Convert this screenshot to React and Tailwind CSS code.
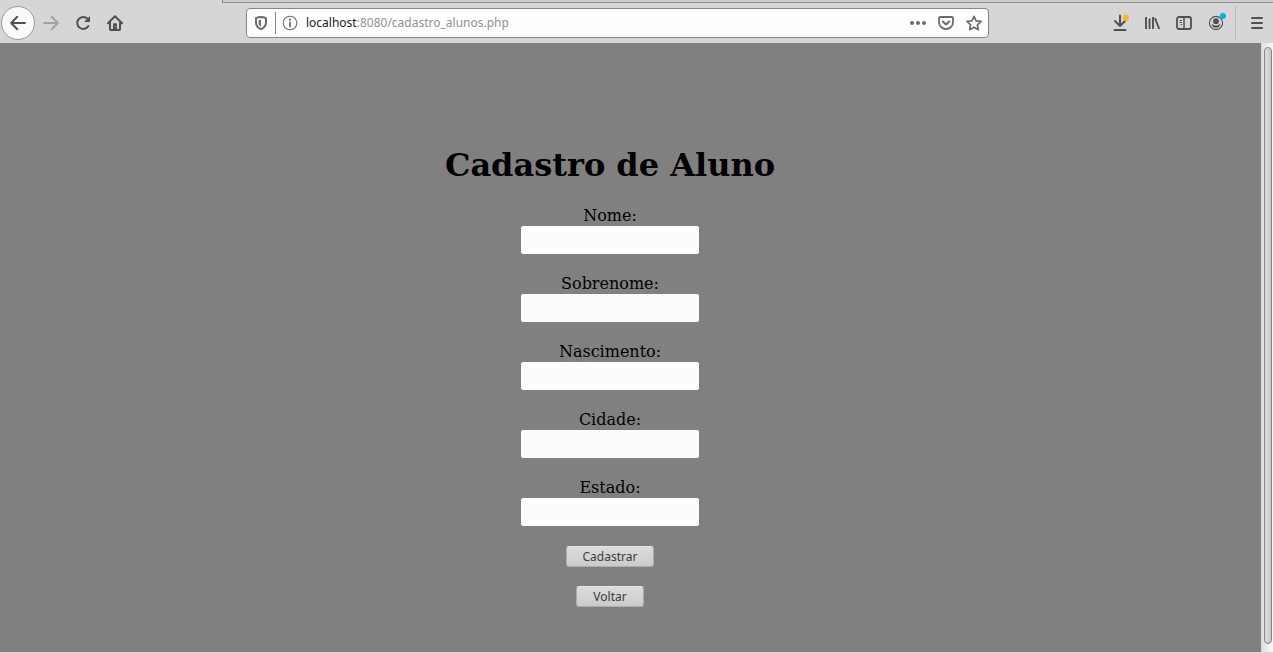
import React from 'react';

const fields = [
  { id: 'nome', label: 'Nome:' },
  { id: 'sobrenome', label: 'Sobrenome:' },
  { id: 'nascimento', label: 'Nascimento:' },
  { id: 'cidade', label: 'Cidade:' },
  { id: 'estado', label: 'Estado:' },
];

function Icon({ children, className = '' }) {
  return (
    <svg
      viewBox="0 0 16 16"
      className={`size-4 shrink-0 ${className}`}
      fill="none"
      stroke="currentColor"
      strokeWidth="2"
      strokeLinecap="round"
      strokeLinejoin="round"
      aria-hidden="true"
    >
      {children}
    </svg>
  );
}

function ToolButton({ label, children, className = '' }) {
  return (
    <button type="button" aria-label={label} className={`flex h-8 w-8 items-center justify-center ${className}`}>
      {children}
    </button>
  );
}

function Toolbar() {
  return (
    <header className="shrink-0 bg-[#d6d6d6] text-[#505050]">
      <div className="flex h-[3px]">
        <div className="w-[222px]" />
        <div className="flex-1 border-b border-l border-[#949494] bg-[#cdcdcd]" />
      </div>
      <div className="flex h-10 items-center pl-px">
        <nav className="flex items-center">
          <button
            type="button"
            aria-label="Voltar uma página"
            className="flex size-[34px] items-center justify-center rounded-full border border-[#999] bg-[#f9f9f9]"
          >
            <Icon>
              <path d="M1.2 8H15M7.2 1.8L1.2 8l6 6.2" />
            </Icon>
          </button>
          <ToolButton label="Avançar" className="text-[#a3a3a3]">
            <Icon>
              <path d="M1 8h13.8M8.8 1.8l6 6.2-6 6.2" />
            </Icon>
          </ToolButton>
          <ToolButton label="Recarregar">
            <Icon>
              <path d="M12.6 3.8A6 6 0 1 0 13.4 11" />
              <path d="M15 1v6H9z" fill="currentColor" stroke="none" />
            </Icon>
          </ToolButton>
          <ToolButton label="Página inicial">
            <Icon>
              <path d="M1 8.2L8 1.2l7 7M3 8v6.2q0 .8.8.8h8.4q.8 0 .8-.8V8" />
              <path d="M6 14V9.2q0-.9.9-.9h2.2q.9 0 .9.9V14z" fill="currentColor" stroke="none" />
              <path d="M8.6 11.5v.2" stroke="#d6d6d6" strokeWidth="1" />
            </Icon>
          </ToolButton>
        </nav>

        <div className="mx-[115px] flex h-[30px] min-w-0 flex-1 items-center rounded-[4px] border border-[#858585] bg-[#fdfdfd] px-1.5 text-[#6c6c6c]">
          <Icon>
            <path d="M8 2c2 .1 3.600 .5 5 1.100V7.500c0 3-1.800 5.300-5 6.700-3.200-1.400-5-3.700-5-6.700V3.100C4.400 2.500 6 2.100 8 2z" />
            <path d="M8 4.800c-.9 0-1.700.2-2.400.4V8c0 1.600.8 2.900 2.400 3.700z" fill="currentColor" stroke="none" />
          </Icon>
          <span className="ml-1.5 h-[22px] w-px bg-[#858585]" />
          <Icon className="ml-1.5">
            <circle cx="8" cy="8" r="6.8" strokeWidth="1.1" />
            <path d="M8 7.4v4" strokeWidth="1.8" />
            <circle cx="8" cy="4.700" r="1.1" fill="currentColor" stroke="none" />
          </Icon>
          <div
            className="ml-2 flex-1 truncate text-xs text-[#929292]"
            style={{ fontFamily: '"Noto Sans", sans-serif' }}
          >
            <span className="text-[#1a1a1a]">localhost</span>:8080/cadastro_alunos.php
          </div>
          <div className="flex gap-3">
            <button type="button" aria-label="Ações da página">
              <Icon>
                <g fill="currentColor" stroke="none">
                  <circle cx="2" cy="8" r="2" />
                  <circle cx="8" cy="8" r="2" />
                  <circle cx="14" cy="8" r="2" />
                </g>
              </Icon>
            </button>
            <button type="button" aria-label="Salvar no Pocket">
              <Icon>
                <path
                  d="M2.200 2h11.600q1.200 0 1.200 1.200V7.200a7 6.800 0 0 1-14 0V3.200Q1 2 2.200 2z"
                  strokeWidth="1.8"
                />
                <path d="M4.800 6.500L8 9.500l3.200-3" />
              </Icon>
            </button>
            <button type="button" aria-label="Adicionar aos favoritos">
              <Icon>
                <path
                  d="M8 1.300l2.100 4.500 4.900 .6-3.600 3.400 .9 4.900L8 12.300l-4.300 2.400 .9-4.900L1 6.400l4.900-.6z"
                  strokeWidth="1.7"
                />
              </Icon>
            </button>
          </div>
        </div>

        <div className="flex items-center">
          <ToolButton label="Downloads">
            <svg viewBox="0 0 18 18" className="size-[18px]" fill="none" aria-hidden="true">
              <path
                d="M9 1.500v10M4 7l5 5 5-5M3.500 16h11"
                stroke="currentColor"
                strokeWidth="2"
                strokeLinecap="round"
                strokeLinejoin="round"
              />
              <circle cx="15" cy="3.800" r="3.3" fill="#ffb636" />
            </svg>
          </ToolButton>
          <ToolButton label="Biblioteca">
            <Icon>
              <path d="M2 2v12M5.500 3.500V14M9 2v12M11 3.200L15.200 14" strokeLinecap="butt" strokeWidth="1.9" />
            </Icon>
          </ToolButton>
          <ToolButton label="Barra lateral">
            <Icon>
              <rect x="1" y="2" width="14" height="12" rx="2" strokeWidth="1.8" />
              <path d="M8 2v12" strokeWidth="1.5" />
              <path d="M3.500 5.500H6M3.500 7.500H6M4.500 9.500H6" strokeWidth="1" strokeLinecap="butt" />
            </Icon>
          </ToolButton>
          <ToolButton label="Conta">
            <svg viewBox="0 0 20 20" className="size-5" fill="none" aria-hidden="true">
              <circle cx="10" cy="10" r="6.6" stroke="currentColor" strokeWidth="1.1" />
              <circle cx="10" cy="8.200" r="2.9" fill="currentColor" />
              <path
                d="M5.600 11.200q1-.2 1.700.5 2.700 1.700 5.400 0 .7-.7 1.700-.5-.9 3.500-4.400 3.500t-4.400-3.500z"
                fill="currentColor"
              />
              <circle cx="17" cy="3" r="3" fill="#00aff5" />
            </svg>
          </ToolButton>
          <span className="ml-[3px] h-[34px] w-px bg-[#bcbcbc]" />
          <button type="button" aria-label="Menu" className="ml-[13px] pr-2">
            <Icon>
              <path d="M3 3h10M3 8h10M3 13h10" />
            </Icon>
          </button>
        </div>
      </div>
    </header>
  );
}

function FormButton({ type = 'button', children }) {
  return (
    <button
      type={type}
      className="flex h-[21px] items-center rounded-[3px] border border-[#adadad] border-t-[#e6e6e6] bg-linear-to-b from-[#dcdcdc] to-[#cbcbcb] px-4 text-xs text-[#3c3c3c]"
      style={{ fontFamily: '"Noto Sans", sans-serif' }}
    >
      {children}
    </button>
  );
}

export default function App() {
  return (
    <div className="flex min-h-screen flex-col bg-[#808080]">
      <Toolbar />
      <div className="flex flex-1 border-b border-[#d6d6d6]">
        <main
          className="flex flex-1 flex-col items-center pt-[102px] pr-[41px] text-black"
          style={{ fontFamily: '"DejaVu Serif", serif' }}
        >
          <h1 className="text-[32px] leading-10 font-bold">Cadastro de Aluno</h1>
          <form className="mt-[21px] flex flex-col items-center gap-5" onSubmit={(e) => e.preventDefault()}>
            {fields.map((f) => (
              <div key={f.id} className="flex flex-col items-center">
                <label htmlFor={f.id} className="text-base leading-5">
                  {f.label}
                </label>
                <input
                  id={f.id}
                  name={f.id}
                  type="text"
                  className="h-7 w-[178px] rounded-[2px] bg-[#fcfcfc] px-2 text-sm"
                />
              </div>
            ))}
            <FormButton type="submit">Cadastrar</FormButton>
          </form>
          <div className="mt-[19px]">
            <FormButton>Voltar</FormButton>
          </div>
        </main>
        <div
          className="flex w-3 border-l border-[#d6d6d6] bg-linear-to-r from-[#e0e0e0] to-[#fafafa] pt-1 pr-px pb-2 pl-0.5"
          aria-hidden="true"
        >
          <div className="flex-1 rounded-full border border-[#858585] bg-linear-to-r from-[#dedede] to-[#c8c8c8]" />
        </div>
      </div>
    </div>
  );
}
